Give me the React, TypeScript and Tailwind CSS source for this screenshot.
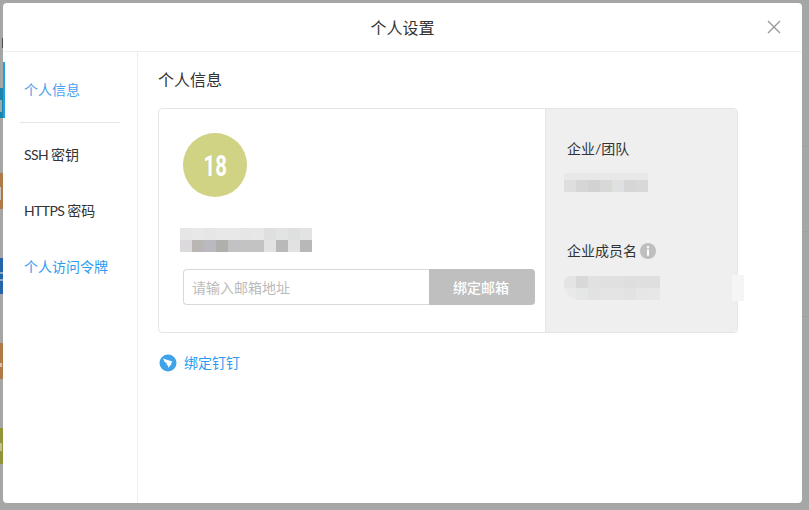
const font = '[font-family:"Lato","Noto_Sans_CJK_SC",sans-serif]'

const nameTop = ["bg-[#e6e6e6]", "bg-[#e8e8e8]", "bg-[#e6e6e8]", "bg-[#e8e8e8]", "bg-[#e8e8e8]", "bg-[#e6e6e6]", "bg-[#e7e7e7]", "bg-[#dfdfdf]", "bg-[#e2e3e3]", "bg-[#dedfdf]", "bg-[#e3e3e3]"]
const nameBottom = ["bg-[#dcd9dd]", "bg-[#b9b6b4]", "bg-[#b9b9bf]", "bg-[#b0afae]", "bg-[#c2c2c4]", "bg-[#c3c3c3]", "bg-[#c4c3c3]", "bg-[#e2e2e2]", "bg-[#b9b9b9]", "bg-[#e2e2e2]", "bg-[#b8b8b8]"]
const companyCells = ["bg-[#dedede]", "bg-[#d6d6d6]", "bg-[#d2d2d2]", "bg-[#d8d8d6]", "bg-[#dfe0e2]", "bg-[#d6d6d6]", "bg-[#d8d8d8]"]
const memberTop = ["bg-[#e4e4e4]", "bg-[#d8d8d8]", "bg-[#e0e1e1]", "bg-[#e0e0e0]", "bg-[#e0e0e0]", "bg-[#dedede]", "bg-[#dfdfdf]", "bg-[#dfdfdf]"]
const memberBottom = ["bg-[#e9e9e9]", "bg-[#e5e7e7]", "bg-[#e2e2e2]", "bg-[#e4e4e4]", "bg-[#e4e4e4]", "bg-[#e2e2e2]", "bg-[#e6e6e6]", "bg-[#e7e7e7]"]

function Pixels({ cells }: { cells: string[] }) {
  return (
    <div className="flex">
      {cells.map((c, i) => (
        <div key={i} className={`h-3 w-3 ${c}`} />
      ))}
    </div>
  )
}

function DingIcon() {
  return (
    <svg width="18" height="18" viewBox="0 0 18 18">
      <circle cx="9" cy="9" r="8.5" fill="#3fa3ea" />
      <path d="M4 4.6 L13.4 7.4 L12 9.4 L12.7 10 L9 14 L9.2 11.4 L7.4 11 L8 9.6 L5.6 8 Z" fill="#fff" />
    </svg>
  )
}

function InfoIcon() {
  return (
    <svg width="16" height="16" viewBox="0 0 16 16">
      <circle cx="8" cy="8" r="8" fill="#bfbfbf" />
      <rect x="7" y="3.2" width="2" height="2" fill="#fff" />
      <rect x="7" y="6.4" width="2" height="6.2" fill="#fff" />
    </svg>
  )
}

export default function App() {
  return (
    <div className={`flex h-[510px] w-[809px] overflow-hidden bg-[#a6a6a6] ${font}`}>
      {/* page behind the overlay */}
      <div className="flex w-[3px] shrink-0 flex-col">
        <div className="mt-[38px] h-[10px] w-px self-end bg-[#4a4a4a]" />
        <div className="mt-[40px] flex h-[30px] flex-col bg-[#1a84ab]">
          <div className="mt-[12px] h-[12px] w-[2px] bg-[#9aa9ae]" />
        </div>
        <div className="mt-[55px] flex h-[36px] flex-col bg-[#ae7a45]">
          <div className="mt-[14px] h-[13px] w-px bg-[#c9c4bd]" />
        </div>
        <div className="mt-[49px] flex h-[36px] flex-col bg-[#2464a8]">
          <div className="mt-[14px] h-[2px] bg-[#8fa9c6]" />
          <div className="mt-[5px] h-[2px] bg-[#8fa9c6]" />
        </div>
        <div className="mt-[49px] flex h-[36px] flex-col bg-[#ae7a45]">
          <div className="mt-[20px] h-[4px] w-[2px] bg-[#d6c2ac]" />
        </div>
        <div className="mt-[49px] flex h-[36px] flex-col bg-[#929438]">
          <div className="mt-[15px] h-[8px] w-[2px] bg-[#c0c19a]" />
        </div>
      </div>

      {/* modal */}
      <div className="mt-[3px] flex h-[500px] w-[799px] shrink-0 flex-col rounded bg-white">
        <div className="relative flex h-[49px] shrink-0 items-center justify-center border-b border-[#eeeeee] pt-[2px] text-[16px] text-[#333]">
          个人设置
          <svg className="absolute left-[764px] top-[17px]" width="14" height="14" viewBox="0 0 14 14">
            <path d="M1 1 L13 13 M13 1 L1 13" stroke="#999" strokeWidth="1.4" fill="none" />
          </svg>
        </div>

        <div className="flex min-h-0 flex-1">
          <div className="flex w-[135px] shrink-0 flex-col border-r border-[#eeeeee] pt-[10px] text-[14px] text-[#333]">
            <div className="flex h-14 items-center border-l-2 border-[#1f9fe8] pb-[2px] pl-[19px] text-[#4a9ff0]">个人信息</div>
            <div className="ml-[17px] mt-1 h-px w-[100px] bg-[#e5e5e5]" />
            <div className="mt-1 flex h-14 items-center pb-[2px] pl-[21px]">
              <span>
                <span className="tracking-[-0.6px]">SSH </span>密钥
              </span>
            </div>
            <div className="flex h-14 items-center pb-[2px] pl-[21px]">
              <span>
                <span className="tracking-[-0.6px]">HTTPS </span>密码
              </span>
            </div>
            <div className="flex h-14 items-center pb-[2px] pl-[21px] text-[#2d9cf0]">个人访问令牌</div>
          </div>

          <div className="flex-1 pl-5 pt-[16px]">
            <h2 className="text-[16px] leading-[24px] text-[#333]">个人信息</h2>

            <div className="mt-[16px] flex h-[225px] w-[580px] rounded border border-[#e5e5e5]">
              <div className="w-[386px] pl-6 pt-6">
                <div className="flex h-16 w-16 items-center justify-center rounded-full bg-[#d0d284] text-[30px] font-bold text-white [font-family:'Roboto',sans-serif]">
                  <span className="inline-block scale-x-[0.68]">18</span>
                </div>
                <div className="-ml-[3px] mt-[31px]">
                  <Pixels cells={nameTop} />
                  <Pixels cells={nameBottom} />
                </div>
                <div className="mt-[17px] flex h-9 w-[352px]">
                  <div className="flex w-[246px] items-center rounded-l border border-r-0 border-[#d9d9d9] pl-2 text-[14px] text-[#bbbbbb]">
                    请输入邮箱地址
                  </div>
                  <div className="flex flex-1 items-center justify-center rounded-r bg-[#bfbfbf] pr-[2px] text-[14px] font-medium text-white">
                    绑定邮箱
                  </div>
                </div>
              </div>

              <div className="relative flex-1 rounded-r border-l border-[#e5e5e5] bg-[#efefef] pl-[18px] pt-[29px] text-[14px] text-[#333]">
                <div className="pl-[3px] leading-[22px]">企业/团队</div>
                <div className="mt-[13px] h-[7px] w-[84px] bg-[#e8e8e8]" />
                <Pixels cells={companyCells} />
                <div className="mt-[48px] flex items-center gap-[3px] pl-[3px] leading-[22px]">
                  企业成员名
                  <InfoIcon />
                </div>
                <div className="mt-[14px] overflow-hidden rounded-bl-2xl rounded-tl-md">
                  <Pixels cells={memberTop} />
                  <Pixels cells={memberBottom} />
                </div>
                <div className="absolute left-[186px] top-[166px] h-[26px] w-3 bg-[#f5f5f5]" />
              </div>
            </div>

            <div className="mt-[21px] flex items-center gap-[7px] pl-px text-[14px] leading-[18px] text-[#2d9cf0]">
              <DingIcon />
              绑定钉钉
            </div>
          </div>
        </div>
      </div>

      <div className="flex flex-1 flex-col">
        <div className="h-[147px] border-b border-[#9e9e9e]" />
        <div className="h-[85px] border-b border-[#9e9e9e]" />
        <div className="h-[85px] border-b border-[#9e9e9e]" />
      </div>
    </div>
  )
}
